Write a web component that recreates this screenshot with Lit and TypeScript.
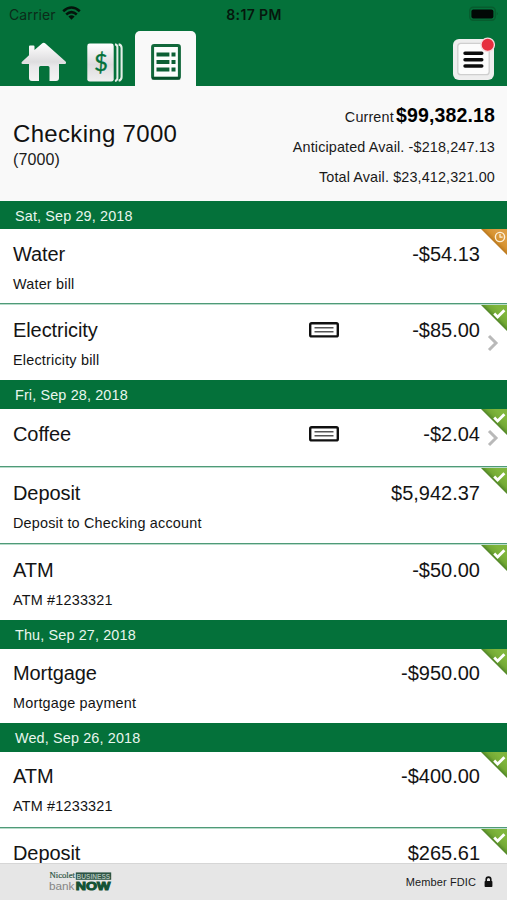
import { LitElement, html, css, svg, nothing } from "lit";
import { customElement, property } from "lit/decorators.js";
import { styleMap } from "lit/directives/style-map.js";

interface Entry {
  name: string;
  memo?: string;
  amount: string;
  height: number;
  lead?: number;
  status: "pending" | "cleared";
  check?: boolean;
  line?: boolean;
}

interface Day {
  date: string;
  height: number;
  entries: Entry[];
}

const DAYS: Day[] = [
  {
    date: "Sat, Sep 29, 2018",
    height: 28,
    entries: [
      { name: "Water", memo: "Water bill", amount: "-$54.13", height: 76, status: "pending", line: true },
      { name: "Electricity", memo: "Electricity bill", amount: "-$85.00", height: 75, status: "cleared", check: true },
    ],
  },
  {
    date: "Fri, Sep 28, 2018",
    height: 29,
    entries: [
      { name: "Coffee", amount: "-$2.04", height: 59, status: "cleared", check: true, line: true },
      { name: "Deposit", memo: "Deposit to Checking account", amount: "$5,942.37", height: 77, status: "cleared", line: true },
      { name: "ATM", memo: "ATM #1233321", amount: "-$50.00", height: 75, status: "cleared" },
    ],
  },
  {
    date: "Thu, Sep 27, 2018",
    height: 29,
    entries: [
      { name: "Mortgage", memo: "Mortgage payment", amount: "-$950.00", height: 74, lead: 12, status: "cleared" },
    ],
  },
  {
    date: "Wed, Sep 26, 2018",
    height: 29,
    entries: [
      { name: "ATM", memo: "ATM #1233321", amount: "-$400.00", height: 77, lead: 12, status: "cleared", line: true },
      { name: "Deposit", amount: "$265.61", height: 76, lead: 12, status: "cleared" },
    ],
  },
];

@customElement("entry-row")
export class EntryRow extends LitElement {
  @property({ attribute: false }) entry!: Entry;

  static styles = css`
    :host {
      display: block;
      flex: none;
    }
    .row {
      position: relative;
      box-sizing: border-box;
      display: flex;
      padding: 13px 27px 0 13px;
      background: #fff;
    }
    .line {
      border-bottom: 1px solid #b9dccb;
      box-shadow: inset 0 -1px #4f9a78;
    }
    .label {
      flex: 1;
      color: #141414;
    }
    .name,
    .amount {
      font-size: 20px;
      line-height: 24px;
      color: #141414;
    }
    .name {
      letter-spacing: -0.08px;
    }
    .memo {
      font-size: 14.4px;
      line-height: 20px;
      margin-top: 8px;
      letter-spacing: 0.2px;
    }
    .slip {
      width: 30px;
      height: 16px;
      margin-top: 4px;
    }
    .amount {
      width: 141.5px;
      text-align: right;
    }
    .corner {
      position: absolute;
      right: 0;
      top: 0;
      width: 26px;
      height: 26px;
    }
    .chevron {
      position: absolute;
      right: 8px;
      top: calc(50% - 9px);
      width: 12px;
      height: 18px;
    }
  `;

  private corner(status: Entry["status"]) {
    const pending = status === "pending";
    return html`<svg class="corner" viewBox="0 0 26 26">
      <defs>
        <linearGradient id="g" gradientUnits="userSpaceOnUse" x1="13" y1="13" x2="20" y2="6">
          <stop offset="0" stop-color=${pending ? "#b9781f" : "#4f8426"}></stop>
          <stop offset="0.4" stop-color=${pending ? "#d6922f" : "#73a934"}></stop>
          <stop offset="1" stop-color=${pending ? "#dc9c42" : "#7fb53c"}></stop>
        </linearGradient>
      </defs>
      <path d="M0 0H26V26Z" fill="url(#g)"></path>
      ${pending
        ? svg`<circle cx="19" cy="8" r="4.6" fill="none" stroke="#fdf1da" stroke-width="1.4"/>
            <path d="M19 5V8.2H21.6" fill="none" stroke="#fdf1da" stroke-width="1.2"/>`
        : svg`<path d="M13.2 8.6L16.6 12L23.4 5.2" fill="none" stroke="#fff" stroke-width="2.8"/>`}
    </svg>`;
  }

  render() {
    const e = this.entry;
    return html`<div
      class="row ${e.line ? "line" : ""}"
      style=${styleMap({ height: `${e.height}px`, paddingTop: `${e.lead ?? 13}px` })}
    >
      <div class="label">
        <div class="name">${e.name}</div>
        ${e.memo ? html`<div class="memo">${e.memo}</div>` : nothing}
      </div>
      ${e.check
        ? html`<svg class="slip" viewBox="0 0 30 16">
            <rect x="1.2" y="1.2" width="27.6" height="13.2" rx="1.5" fill="#fff" stroke="#101010" stroke-width="2.4"></rect>
            <path d="M5.5 5.8H24.5M5.5 9.8H24.5" stroke="#555" stroke-width="1.5"></path>
          </svg>`
        : nothing}
      <div class="amount">${e.amount}</div>
      ${this.corner(e.status)}
      ${e.check
        ? html`<svg class="chevron" viewBox="0 0 12 18">
            <path d="M2 2L9 9L2 16" fill="none" stroke="#b9b9b9" stroke-width="3"></path>
          </svg>`
        : nothing}
    </div>`;
  }
}

@customElement("app-root")
export class AppRoot extends LitElement {
  static styles = css`
    :host {
      display: flex;
      flex-direction: column;
      width: 507px;
      height: 900px;
      overflow: hidden;
      background: #fff;
      color: #1a1a1a;
      font-family: "Liberation Sans", Arial, sans-serif;
    }
    .head {
      flex: none;
      height: 86px;
      background: #04713a;
      display: flex;
      flex-direction: column;
    }
    .status {
      height: 28px;
      display: grid;
      grid-template-columns: 1fr auto 1fr;
      align-items: center;
      padding: 0 8px 0 9px;
      box-sizing: border-box;
      font-family: Inter, sans-serif;
      font-size: 14px;
      color: #06170d;
    }
    .carrier {
      display: flex;
      align-items: center;
      gap: 6px;
      color: #0b2b19;
      letter-spacing: 0.12px;
    }
    .wifi {
      width: 19px;
      height: 14px;
      margin-top: -2px;
    }
    .time {
      font-weight: 600;
      font-size: 14px;
      letter-spacing: 0.4px;
    }
    .battery {
      justify-self: end;
      width: 30px;
      height: 16px;
    }
    .nav {
      flex: 1;
      display: flex;
      align-items: flex-end;
    }
    .home {
      width: 46px;
      height: 40px;
      margin: 0 0 4px 21px;
    }
    .money {
      width: 37px;
      height: 39px;
      margin: 0 0 4px 20px;
    }
    .tab {
      width: 61px;
      height: 55px;
      margin-left: 11px;
      border-radius: 5px 5px 0 0;
      background: #f9f9f9;
      display: flex;
      justify-content: center;
    }
    .ledger {
      width: 30px;
      height: 36px;
      margin-top: 13px;
    }
    .menu {
      width: 44px;
      height: 44px;
      margin: 0 12px 6px auto;
    }
    .summary {
      flex: none;
      height: 115px;
      box-sizing: border-box;
      padding: 0 12px 0 13px;
      background: #f9f9f9;
      display: flex;
      justify-content: space-between;
    }
    .title {
      font-size: 24px;
      line-height: 28px;
      margin-top: 34px;
      color: #111;
      letter-spacing: 0.32px;
    }
    .number {
      font-size: 16px;
      line-height: 20px;
      margin-top: 2px;
      letter-spacing: 0.1px;
    }
    .balances {
      text-align: right;
      font-size: 14.4px;
      line-height: 30px;
      padding-top: 14px;
      letter-spacing: 0.13px;
    }
    .current {
      font-size: 19.5px;
      font-weight: 700;
      color: #000;
      letter-spacing: 0.15px;
      margin-left: -2px;
    }
    .list {
      flex: 1;
      min-height: 0;
      overflow: hidden;
      display: flex;
      flex-direction: column;
    }
    .date {
      flex: none;
      box-sizing: border-box;
      background: #04713a;
      color: #e9f6ee;
      font-size: 14.4px;
      letter-spacing: 0.14px;
      padding: 1px 0 0 15px;
      display: flex;
      align-items: center;
    }
    .foot {
      flex: none;
      height: 37px;
      box-sizing: border-box;
      border-top: 1px solid #d6d6d6;
      background: #e6e6e6;
      display: flex;
      align-items: center;
      padding: 0 14px 0 49px;
      font-size: 11px;
    }
    .logo {
      width: 64px;
      height: 26px;
    }
    .fdic {
      margin-left: auto;
      letter-spacing: 0.1px;
    }
    .lock {
      width: 9px;
      height: 12px;
      margin-left: 8px;
    }
  `;

  render() {
    return html`
      <header class="head">
        <div class="status">
          <div class="carrier">
            <span>Carrier</span>
            <svg class="wifi" viewBox="0 0 19 14" fill="none" stroke="#04140b" stroke-width="2.6">
              <path d="M1.2 5.2Q9.5 -2.2 17.8 5.2"></path>
              <path d="M4.2 8.4Q9.5 3.8 14.8 8.4"></path>
              <path d="M6.4 10.6Q9.5 8 12.6 10.6L9.5 13.8Z" fill="#04140b" stroke="none"></path>
            </svg>
          </div>
          <div class="time">8:17 PM</div>
          <svg class="battery" viewBox="0 0 30 16">
            <rect x="0.7" y="1.2" width="25.6" height="13" rx="3.6" fill="none" stroke="#075c2e" stroke-width="1.4"></rect>
            <rect x="2.4" y="3.4" width="22" height="9" rx="2" fill="#020806"></rect>
            <path d="M27.8 5.8Q29.6 7.7 27.8 9.6Z" fill="#075328"></path>
          </svg>
        </div>
        <nav class="nav">
          <svg class="home" viewBox="0 0 46 40">
            <defs>
              <linearGradient id="h" x1="0" y1="0" x2="0" y2="1">
                <stop offset="0" stop-color="#fff"></stop>
                <stop offset="0.5" stop-color="#dedddf"></stop>
                <stop offset="0.62" stop-color="#e9e8ea"></stop>
                <stop offset="1" stop-color="#f4f4f4"></stop>
              </linearGradient>
            </defs>
            <path
              d="M8 4.5Q8 3.5 9 3.5H12.5Q13.5 3.5 13.5 4.5V8L21 1.4Q22.7 0 24.4 1.4L44.6 19.6Q46 21.8 43.5 22H38V36Q38 39 35 39H28.5V25.5Q28.5 24 27 24H19.5Q18 24 18 25.5V39H11Q8 39 8 36V22H2Q-0.5 21.8 1 19.8L8 13.2Z"
              fill="url(#h)"
            ></path>
          </svg>
          <svg class="money" viewBox="0 0 37 39">
            <defs>
              <linearGradient id="m" x1="0" y1="0" x2="0" y2="1">
                <stop offset="0" stop-color="#fff"></stop>
                <stop offset="0.55" stop-color="#dddcde"></stop>
                <stop offset="1" stop-color="#efefef"></stop>
              </linearGradient>
            </defs>
            <rect x="0.3" y="0.6" width="26.4" height="38" rx="2.4" fill="url(#m)"></rect>
            <path d="M28 1.2Q30.4 1.8 30.4 4V35Q30.4 37.4 28 38" fill="none" stroke="#e4efe8" stroke-width="2"></path>
            <path d="M31.6 1.4Q34.6 2 34.6 5V34Q34.6 37 31.6 37.8" fill="none" stroke="#e4efe8" stroke-width="2.1"></path>
            <text x="14" y="28.2" text-anchor="middle" font-family="Lato, sans-serif" font-size="24" fill="#04713a" stroke="#04713a" stroke-width="0.3">$</text>
          </svg>
          <div class="tab">
            <svg class="ledger" viewBox="0 0 30 36">
              <rect x="1.6" y="1.6" width="26.8" height="32.6" rx="1.6" fill="#fbfdfc" stroke="#12683b" stroke-width="3"></rect>
              <path d="M0.8 34.2H29.2" stroke="#064f2a" stroke-width="2.6"></path>
              <path d="M5.5 10.5H18.4M5.5 18H18.4M5.5 25.5H18.4" stroke="#0b5f34" stroke-width="3.8"></path>
              <path d="M20.5 10.5H24.5M20.5 18H24.5M20.5 25.5H24.5" stroke="#0b5f34" stroke-width="4"></path>
            </svg>
          </div>
          <svg class="menu" viewBox="0 0 44 44">
            <rect x="2" y="3" width="41" height="41" rx="6" fill="#eeeeee"></rect>
            <rect x="6.8" y="7.3" width="31.4" height="31.4" rx="3" fill="#fcfcfc" stroke="#cfcfcf" stroke-width="1.3"></rect>
            <path d="M14 17.3H30.8M14 23.7H30.8M14 30H30.8" stroke="#0b0b0b" stroke-width="3.4" stroke-linecap="round"></path>
            <circle cx="36.7" cy="8.8" r="6.7" fill="#e62e3e" stroke="#f6d9dc" stroke-width="1.3"></circle>
          </svg>
        </nav>
      </header>
      <section class="summary">
        <div>
          <div class="title">Checking 7000</div>
          <div class="number">(7000)</div>
        </div>
        <div class="balances">
          <div>Current <span class="current">$99,382.18</span></div>
          <div>Anticipated Avail. -$218,247.13</div>
          <div>Total Avail. $23,412,321.00</div>
        </div>
      </section>
      <main class="list">
        ${DAYS.map(
          (d) => html`<div class="date" style=${styleMap({ height: `${d.height}px` })}>${d.date}</div>
            ${d.entries.map((e) => html`<entry-row .entry=${e}></entry-row>`)}`,
        )}
      </main>
      <footer class="foot">
        <svg class="logo" viewBox="0 0 64 26">
          <rect x="26.8" y="3.4" width="35.4" height="7.4" fill="#2c5443"></rect>
          <text x="0.5" y="9.4" font-family="Liberation Serif, serif" font-size="9" textLength="25.5" lengthAdjust="spacingAndGlyphs" fill="#2c5443" stroke="#2c5443" stroke-width="0.2">Nicolet</text>
          <text x="27.6" y="9.6" font-family="Liberation Sans, sans-serif" font-weight="700" font-size="6.8" textLength="33.6" lengthAdjust="spacingAndGlyphs" fill="#a9bdb3">BUSINESS</text>
          <text x="0" y="21.2" font-family="Liberation Sans, sans-serif" font-size="11" textLength="25.5" lengthAdjust="spacingAndGlyphs" fill="#858585">bank</text>
          <text x="26.8" y="21.2" font-family="Liberation Sans, sans-serif" font-weight="700" font-size="11.2" textLength="34.6" lengthAdjust="spacingAndGlyphs" fill="#145234" stroke="#145234" stroke-width="1">NOW</text>
        </svg>
        <span class="fdic">Member FDIC</span>
        <svg class="lock" viewBox="0 0 9 12">
          <path d="M2.2 6V3.6Q2.2 1.1 4.5 1.1Q6.8 1.1 6.8 3.6V6" fill="none" stroke="#111" stroke-width="1.6"></path>
          <rect x="0.6" y="5" width="7.8" height="6" rx="0.8" fill="#111"></rect>
        </svg>
      </footer>
    `;
  }
}
